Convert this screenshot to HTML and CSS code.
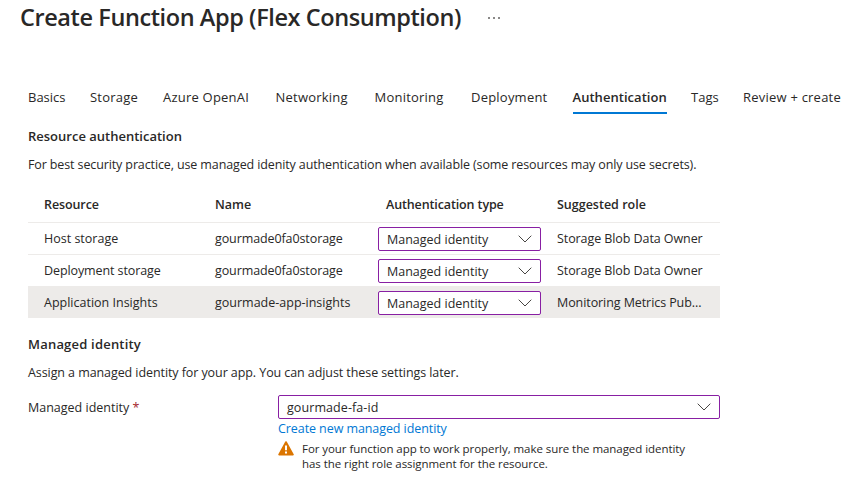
FILE: index.html
```html
<!DOCTYPE html>
<html lang="en">
<head>
<meta charset="utf-8">
<title>Create Function App (Flex Consumption)</title>
<link rel="stylesheet" href="styles.css">
</head>
<body>
<header class="page-header">
  <h1>Create Function App (Flex Consumption)</h1>
  <svg class="more" width="12" height="2" viewBox="0 0 12 2"><path d="M0 0h2v2H0zM5 0h2v2H5zM10 0h2v2h-2z" fill="#8a8988"/></svg>
</header>
<nav class="tabs">
  <a class="tab tight">Basics</a>
  <a class="tab">Storage</a>
  <a class="tab">Azure OpenAI</a>
  <a class="tab">Networking</a>
  <a class="tab">Monitoring</a>
  <a class="tab">Deployment</a>
  <a class="tab active">Authentication</a>
  <a class="tab tight">Tags</a>
  <a class="tab">Review + create</a>
</nav>
<main>
  <h2>Resource authentication</h2>
  <p class="intro">For best security practice, use managed idenity authentication when available (some resources may only use secrets).</p>
  <div class="table">
    <div class="row head">
      <span class="narrow">Resource</span><span>Name</span><span class="auth-head">Authentication type</span><span>Suggested role</span>
    </div>
    <div class="row">
      <span>Host storage</span><span class="narrow">gourmade0fa0storage</span>
      <div class="select"><span>Managed identity</span><svg class="chevron" width="14" height="8" viewBox="0 0 14 8"><path d="M.7.7 7 7 13.3.7"/></svg></div>
      <span class="role">Storage Blob Data Owner</span>
    </div>
    <div class="row">
      <span class="narrow">Deployment storage</span><span class="narrow">gourmade0fa0storage</span>
      <div class="select"><span>Managed identity</span><svg class="chevron" width="14" height="8" viewBox="0 0 14 8"><path d="M.7.7 7 7 13.3.7"/></svg></div>
      <span class="role">Storage Blob Data Owner</span>
    </div>
    <div class="row selected">
      <span>Application Insights</span><span>gourmade-app-insights</span>
      <div class="select"><span>Managed identity</span><svg class="chevron" width="14" height="8" viewBox="0 0 14 8"><path d="M.7.7 7 7 13.3.7"/></svg></div>
      <span class="role">Monitoring Metrics Pub...</span>
    </div>
  </div>
  <h2 class="identity-title">Managed identity</h2>
  <p class="assign">Assign a managed identity for your app. You can adjust these settings later.</p>
  <div class="field">
    <label>Managed identity <span class="required">*</span></label>
    <div class="control">
      <div class="select"><span class="value">gourmade-fa-id</span><svg class="chevron" width="14" height="8" viewBox="0 0 14 8"><path d="M.7.7 7 7 13.3.7"/></svg></div>
      <a class="link">Create new managed identity</a>
      <div class="warning">
        <svg width="16" height="15" viewBox="0 0 16 15"><path d="M8 1 15 13.6H1z" fill="#db7500" stroke="#db7500" stroke-width="1.6" stroke-linejoin="round"/><path d="M7 4.6h2v4.6H7zM7 10.4h2v2H7z" fill="#fff"/></svg>
        <p>For your function app to work properly, make sure the managed identity<br>has the right role assignment for the resource.</p>
      </div>
    </div>
  </div>
</main>
</body>
</html>
```
FILE: styles.css
```css
* { box-sizing: border-box; }
body {
  margin: 0;
  width: 857px;
  height: 488px;
  overflow: hidden;
  background: #fff;
  color: #292827;
  font: 12.5px/20px "Open Sans", sans-serif;
  white-space: nowrap;
}
h1, h2, p { margin: 0; }
.page-header {
  display: flex;
  align-items: center;
  gap: 27px;
  height: 36px;
  padding-left: 20px;
}
h1 {
  width: 441px;
  padding-bottom: 2px;
  font-size: 23.5px;
  line-height: 34px;
  font-weight: 600;
  letter-spacing: -.41px;
}
.tabs {
  display: grid;
  grid-template-columns: 62px 73px 112.5px 99px 96.5px 101.5px 118.5px 52px auto;
  justify-items: start;
  margin: 51px 0 0 28px;
  font-size: 13px;
}
.tab { height: 27px; letter-spacing: .22px; }
.tight { letter-spacing: 0; }
.active {
  border-bottom: 2px solid #0078d4;
  font-weight: 600;
  letter-spacing: .04px;
}
main { width: 692px; margin: 12px 0 0 28px; }
h2 { font-size: 13px; line-height: 20px; font-weight: 600; }
.intro { margin-top: 9px; letter-spacing: -.12px; }
.table { margin-top: 11px; }
.row {
  display: grid;
  grid-template-columns: 171px 163px 179px 1fr;
  height: 32px;
  padding-left: 16px;
  border-top: 1px solid #edebe9;
  line-height: 31px;
}
.head {
  height: 36px;
  border-top: 0;
  font-weight: 600;
  line-height: 38px;
}
.auth-head { padding-left: 8px; letter-spacing: -.12px; }
.narrow { letter-spacing: -.1px; }
.role { letter-spacing: -.08px; }
.selected { background: #edebe9; }
.select {
  display: flex;
  align-items: center;
  justify-content: space-between;
  height: 24px;
  padding: 0 8px;
  border: 1px solid #881fa3;
  border-radius: 2px;
  background: #fff;
  line-height: 20px;
}
.select span { padding-top: 2px; }
.row .select { width: 163px; margin-top: 4px; }
.chevron { fill: none; stroke: #484644; stroke-width: 1; }
.identity-title { margin-top: 16px; letter-spacing: .2px; }
.assign { margin-top: 9px; letter-spacing: -.08px; }
.field { display: flex; margin-top: 12px; }
label { width: 250px; line-height: 26px; }
.required { color: #a4262c; }
.control { flex: 1; }
.value { letter-spacing: .08px; }
.link {
  display: block;
  line-height: 19px;
  color: #0078d4;
  letter-spacing: -.08px;
}
.warning {
  display: flex;
  gap: 8px;
  margin-top: 3px;
  font-size: 11.5px;
  line-height: 15px;
  letter-spacing: -.06px;
}
```
